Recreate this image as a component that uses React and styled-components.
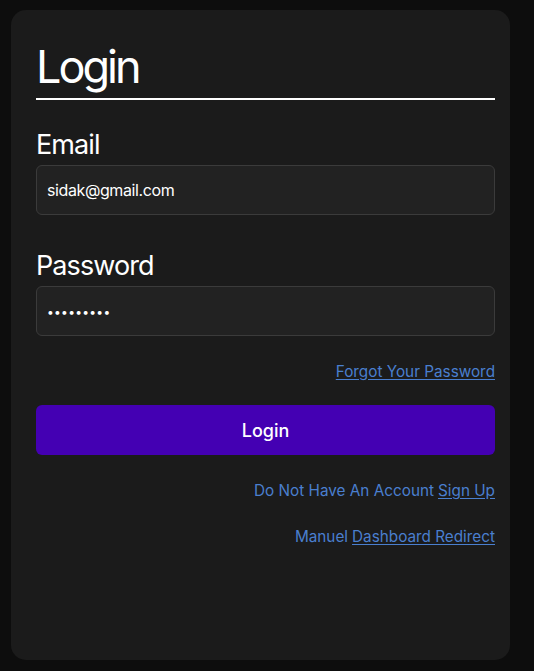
import React from "react";
import styled, { createGlobalStyle } from "styled-components";

const Global = createGlobalStyle`
  html, body { margin: 0; padding: 0; background: #0d0d0d; }
  body { font-family: Inter, "Noto Sans", sans-serif; color: #fff; }
  * { box-sizing: border-box; }
`;

const Page = styled.div`
  padding: 10px 24px 11px 11px;
  min-height: 671px;
`;

const Card = styled.form`
  width: 499px;
  height: 650px;
  background: #1b1b1b;
  border-radius: 15px;
  padding: 34px 15px 0 25px;
  display: flex;
  flex-direction: column;
`;

const Title = styled.h1`
  margin: 0;
  font-size: 45px;
  line-height: 45px;
  font-weight: 400;
  letter-spacing: -3px;
  padding-bottom: 9px;
  border-bottom: 2px solid #fff;
`;

const Label = styled.label`
  display: block;
  font-size: 27px;
  line-height: 27px;
  font-weight: 400;
  letter-spacing: -0.9px;
  margin-top: ${(p) => p.$top}px;
`;

const Input = styled.input`
  display: block;
  width: 100%;
  height: 50px;
  margin-top: 7px;
  padding: 0 10px;
  background: #222222;
  border: 1px solid #3b3b3b;
  border-radius: 6px;
  color: #fff;
  font-family: Inter, "Noto Sans", sans-serif;
  font-size: ${(p) => (p.type === "password" ? "12px" : "16px")};
  outline: none;
  letter-spacing: ${(p) => (p.type === "password" ? "0.3px" : "-0.4px")};
`;

const Row = styled.div`
  display: flex;
  justify-content: flex-end;
  font-size: 15.3px;
  line-height: 15px;
  color: #4a7fcf;
  margin-top: ${(p) => p.$top}px;
  gap: 4px;
`;

const Link = styled.a`
  color: #4a7fcf;
  text-decoration: underline;
  text-underline-offset: 2px;
  cursor: pointer;
`;

const Button = styled.button`
  margin-top: 26px;
  height: 50px;
  width: 100%;
  border: none;
  border-radius: 6px;
  background: #4400b3;
  color: #fff;
  font-family: Inter, "Noto Sans", sans-serif;
  font-size: 18px;
  font-weight: 500;
  cursor: pointer;
`;

export default function App() {
  return (
    <>
      <Global />
      <Page>
        <Card onSubmit={(e) => e.preventDefault()}>
          <Title>Login</Title>
          <Label $top={31} htmlFor="email">Email</Label>
          <Input id="email" type="email" defaultValue="sidak@gmail.com" />
          <Label $top={37} htmlFor="password">Password</Label>
          <Input id="password" type="password" defaultValue="123456789" />
          <Row $top={28}>
            <Link>Forgot Your Password</Link>
          </Row>
          <Button type="submit">Login</Button>
          <Row $top={28}>
            <span>Do Not Have An Account</span>
            <Link>Sign Up</Link>
          </Row>
          <Row $top={31}>
            <span>Manuel</span>
            <Link>Dashboard Redirect</Link>
          </Row>
        </Card>
      </Page>
    </>
  );
}
